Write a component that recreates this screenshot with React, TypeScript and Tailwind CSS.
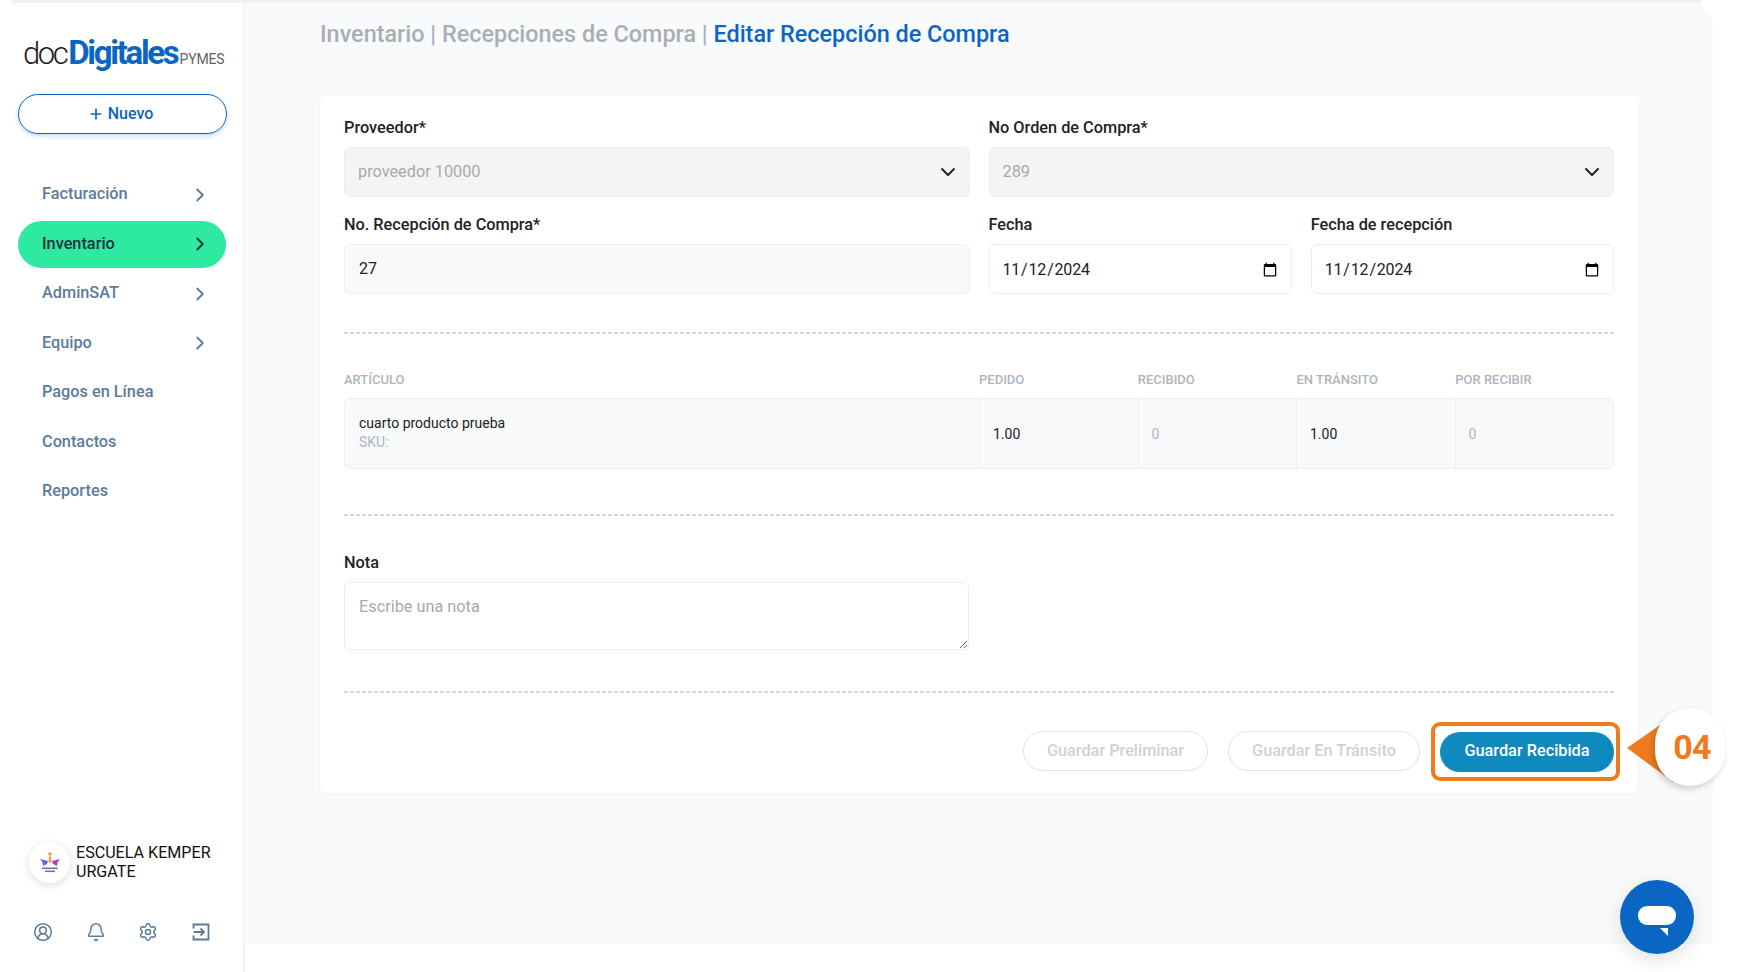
import { Plus, ChevronRight, ChevronDown, CircleUserRound, Bell, Settings } from "lucide-react";

const navItems = [
  { label: "Facturación", arrow: true },
  { label: "Inventario", arrow: true, active: true },
  { label: "AdminSAT", arrow: true },
  { label: "Equipo", arrow: true },
  { label: "Pagos en Línea" },
  { label: "Contactos" },
  { label: "Reportes" },
];

const Logo = () => (
  <div className="flex items-baseline pl-[23px] h-[40px] whitespace-nowrap">
    <span className="text-[31px] font-light tracking-[-0.08em] text-[#1d1d1f] leading-[40px]">doc</span>
    <span className="text-[33px] font-bold tracking-[-0.07em] text-[#0b66c3] leading-[40px] ml-[2px]">Digitales</span>
    <span className="text-[14px] text-[#5f6368] ml-[2px] tracking-[-0.01em]">PYMES</span>
  </div>
);

const Sidebar = () => (
  <aside className="w-[245px] shrink-0 flex flex-col border-r-2 border-[#f3f4f6] bg-white">
    <div className="pt-[30px]">
      <Logo />
    </div>
    <button className="mx-[18px] mt-[21px] h-[40px] w-[209px] rounded-full border border-[#0b66c3] shadow-[0_2px_4px_rgba(11,102,195,0.25)] flex items-center justify-center gap-[4px] pr-[4px] text-[#0b66c3] text-[16px] font-medium">
      <Plus className="w-[16px] h-[16px]" strokeWidth={2.5} />
      Nuevo
    </button>
    <nav className="mt-[37px] flex flex-col gap-[2.5px] pl-[18px] pr-[17px]">
      {navItems.map((item) => (
        <div
          key={item.label}
          className={`h-[47px] rounded-full pl-[24px] pr-[15px] flex items-center justify-between text-[16.3px] font-medium ${
            item.active ? "bg-[#2ee9a0] text-[#16323f]" : "text-[#5b7b9c]"
          }`}
        >
          {item.label}
          {item.arrow && (
            <ChevronRight
              className={`w-[22px] h-[22px] ${item.active ? "text-[#16323f]" : "text-[#5b7b9c]"}`}
              strokeWidth={2}
            />
          )}
        </div>
      ))}
    </nav>
    <div className="mt-auto pb-[30px]">
      <div className="flex items-center pl-[29px] gap-[6px]">
        <div className="w-[41px] h-[41px] rounded-full bg-white shadow-[0_2px_8px_rgba(0,0,0,0.14)] flex items-center justify-center">
          <svg viewBox="0 0 24 24" className="w-[24px] h-[24px]">
            <circle cx="12" cy="3" r="1.8" fill="#f0a040" />
            <path d="M11 5.5h2l.4 5-1.4 2-1.4-2z" fill="#f0a040" />
            <path d="M2 8l8 2-1 3-4 2-.5-3.5z" fill="#5a6fd8" />
            <path d="M22 8l-8 2 1 3 4 2 .5-3.5z" fill="#b83ac0" />
            <rect x="4" y="16.5" width="16" height="1.6" fill="#7a6fb0" />
            <rect x="7" y="19.5" width="10" height="1.6" fill="#7a6fb0" />
          </svg>
        </div>
        <div className="text-[16.1px] leading-[19px] text-[#111] -mt-[2px]">
          ESCUELA KEMPER
          <br />
          URGATE
        </div>
      </div>
      <div className="mt-[39px] pl-[33px] pr-[32px] flex items-center justify-between text-[#5b7b9c]">
        <CircleUserRound className="w-[20px] h-[20px]" strokeWidth={1.8} />
        <Bell className="w-[20px] h-[20px]" strokeWidth={1.8} />
        <Settings className="w-[20px] h-[20px]" strokeWidth={1.8} />
        <svg viewBox="0 0 20 20" className="w-[20px] h-[20px]" fill="none" stroke="currentColor" strokeWidth="1.8">
          <path d="M2.5 6.5V2.5h15v15h-15v-4" />
          <path d="M2.5 10h10.5M9.5 6.5 13 10l-3.5 3.5" />
        </svg>
      </div>
    </div>
  </aside>
);

const Label = ({ children }: { children: React.ReactNode }) => (
  <div className="text-[16.3px] leading-[24px] font-medium text-[#222]">{children}</div>
);

const SelectBox = ({ value }: { value: string }) => (
  <div className="mt-[7px] h-[50px] rounded-[6px] border border-[#eeeeee] bg-[#f4f4f4] pl-[13px] pr-[9px] flex items-center justify-between text-[16.3px] text-[#a9a9a9]">
    {value}
    <ChevronDown className="w-[24px] h-[24px] text-[#222]" strokeWidth={2} />
  </div>
);

const DateBox = () => (
  <input
    type="date"
    defaultValue="2024-11-12"
    className="mt-[7px] block w-full h-[50px] rounded-[6px] border border-[#eeeeee] bg-white pl-[12px] pr-[11px] pt-[1px] text-[16px] tracking-[-0.012em] text-[#222]"
  />
);

const Divider = () => (
  <div className="h-[2px] bg-[repeating-linear-gradient(90deg,#d6d6d6_0_4px,transparent_4px_6px)]" />
);

const columns = [
  { title: "PEDIDO", value: "1.00", muted: false },
  { title: "RECIBIDO", value: "0", muted: true },
  { title: "EN TRÁNSITO", value: "1.00", muted: false },
  { title: "POR RECIBIR", value: "0", muted: true },
];

const ItemsTable = () => (
  <div>
    <div className="flex h-[26px] text-[13px] leading-[15px] font-medium text-[#adb5bd]">
      <div className="w-[635px]">ARTÍCULO</div>
      {columns.map((c) => (
        <div key={c.title} className="flex-1">
          {c.title}
        </div>
      ))}
    </div>
    <div className="flex h-[71px] rounded-[6px] border border-[#eeeeee] bg-[#f8f9fa]">
      <div className="w-[634px] pl-[14px] pb-[2px] flex flex-col justify-center text-[14px] leading-[19px]">
        <span className="text-[#222]">cuarto producto prueba</span>
        <span className="text-[#adb5bd]">SKU:</span>
      </div>
      {columns.map((c) => (
        <div
          key={c.title}
          className={`flex-1 border-l border-[#eeeeee] pl-[13px] pt-[1px] flex items-center text-[14px] ${
            c.muted ? "text-[#adb5bd]" : "text-[#222]"
          }`}
        >
          {c.value}
        </div>
      ))}
    </div>
  </div>
);

const Actions = () => (
  <div className="flex justify-end items-center gap-[20px] pt-[38px]">
    <button className="w-[185px] h-[40px] rounded-full border border-[#dfe1e4] text-[16.3px] font-medium text-[#ced2d7]">
      Guardar Preliminar
    </button>
    <button className="w-[192px] h-[40px] rounded-full border border-[#dfe1e4] text-[16.3px] font-medium text-[#ced2d7]">
      Guardar En Tránsito
    </button>
    {/* highlight frame of the tutorial step, it hangs out of the row */}
    <div className="-ml-[9px] -mr-[6px] -my-[10px] border-[4px] border-[#f07b1f] rounded-[9px] pl-[5px] pr-[2px] pt-[6px] pb-[5px]">
      <button className="block w-[174px] h-[40px] rounded-full bg-[#0f8abf] text-[16.3px] font-medium text-white">
        Guardar Recibida
      </button>
    </div>
  </div>
);

const Callout = () => (
  <div className="absolute left-[1627px] top-[708px] w-[98px] h-[78px]">
    <svg viewBox="0 0 60 78" className="absolute left-0 top-0 w-[60px] h-[78px]">
      <path d="M0 40 L46 8 L46 74 Z" fill="#f07b1f" />
    </svg>
    <div className="absolute left-[28px] top-0 w-[70px] h-[78px] rounded-full bg-white shadow-[-2px_3px_6px_rgba(0,0,0,0.18)] flex items-center justify-center pl-[4px] text-[34px] font-bold tracking-[-0.02em] text-[#f07b1f]">
      04
    </div>
  </div>
);

const ChatBubble = () => (
  <button className="absolute left-[1620px] top-[880px] w-[74px] h-[74px] rounded-full bg-[#0b66c3] shadow-[0_6px_20px_rgba(0,0,0,0.12)] flex items-center justify-center">
    <svg viewBox="0 0 38 30" className="w-[38px] h-[30px] mt-[8px]">
      <rect x="0" y="0" width="38" height="19" rx="9" fill="#fff" />
      <path d="M22 22h8v8z" fill="#fff" />
    </svg>
  </button>
);

export default function App() {
  return (
    <div className="relative w-[1743px] h-[972px] overflow-hidden bg-white flex flex-col font-['Roboto',sans-serif]">
      <div className="h-[3px] ml-[12px] mr-[42px] bg-[#eef0f2]" />
      <div className="flex flex-1 min-h-0">
        <Sidebar />
        <main className="w-[1468px] h-[941px] bg-[#f8fafb] rounded-tr-[24px] pl-[75px] pr-[75px]">
          <h1 className="pt-[16px] h-[92px] text-[23.4px] leading-[30px] font-medium text-[#a9afb6] whitespace-nowrap">
            Inventario | Recepciones de Compra | <span className="text-[#0b66c3]">Editar Recepción de Compra</span>
          </h1>
          <section className="h-[698px] bg-white rounded-[8px] shadow-[0_1px_4px_rgba(0,0,0,0.03)] px-[24px] pt-[21px]">
            <div className="grid grid-cols-2 gap-x-[19px]">
              <div>
                <Label>Proveedor*</Label>
                <SelectBox value="proveedor 10000" />
              </div>
              <div>
                <Label>No Orden de Compra*</Label>
                <SelectBox value="289" />
              </div>
            </div>
            <div className="grid grid-cols-2 gap-x-[19px] mt-[16px]">
              <div>
                <Label>No. Recepción de Compra*</Label>
                <div className="mt-[7px] h-[50px] rounded-[6px] border border-[#eeeeee] bg-[#f8f9fa] pl-[14px] flex items-center text-[16px] text-[#222]">
                  27
                </div>
              </div>
              <div className="grid grid-cols-2 gap-x-[19px]">
                <div>
                  <Label>Fecha</Label>
                  <DateBox />
                </div>
                <div>
                  <Label>Fecha de recepción</Label>
                  <DateBox />
                </div>
              </div>
            </div>
            <div className="mt-[38px]">
              <Divider />
            </div>
            <div className="mt-[38px]">
              <ItemsTable />
            </div>
            <div className="mt-[45px]">
              <Divider />
            </div>
            <div className="mt-[35px] w-[625px]">
              <Label>Nota</Label>
              <textarea
                placeholder="Escribe una nota"
                className="mt-[7px] block w-full h-[68px] rounded-[6px] border border-[#eeeeee] bg-white px-[14px] py-[12px] text-[16.3px] text-[#222] placeholder:text-[#a3a9b2]"
              />
            </div>
            <div className="mt-[41px]">
              <Divider />
            </div>
            <Actions />
          </section>
        </main>
      </div>
      <Callout />
      <ChatBubble />
    </div>
  );
}
